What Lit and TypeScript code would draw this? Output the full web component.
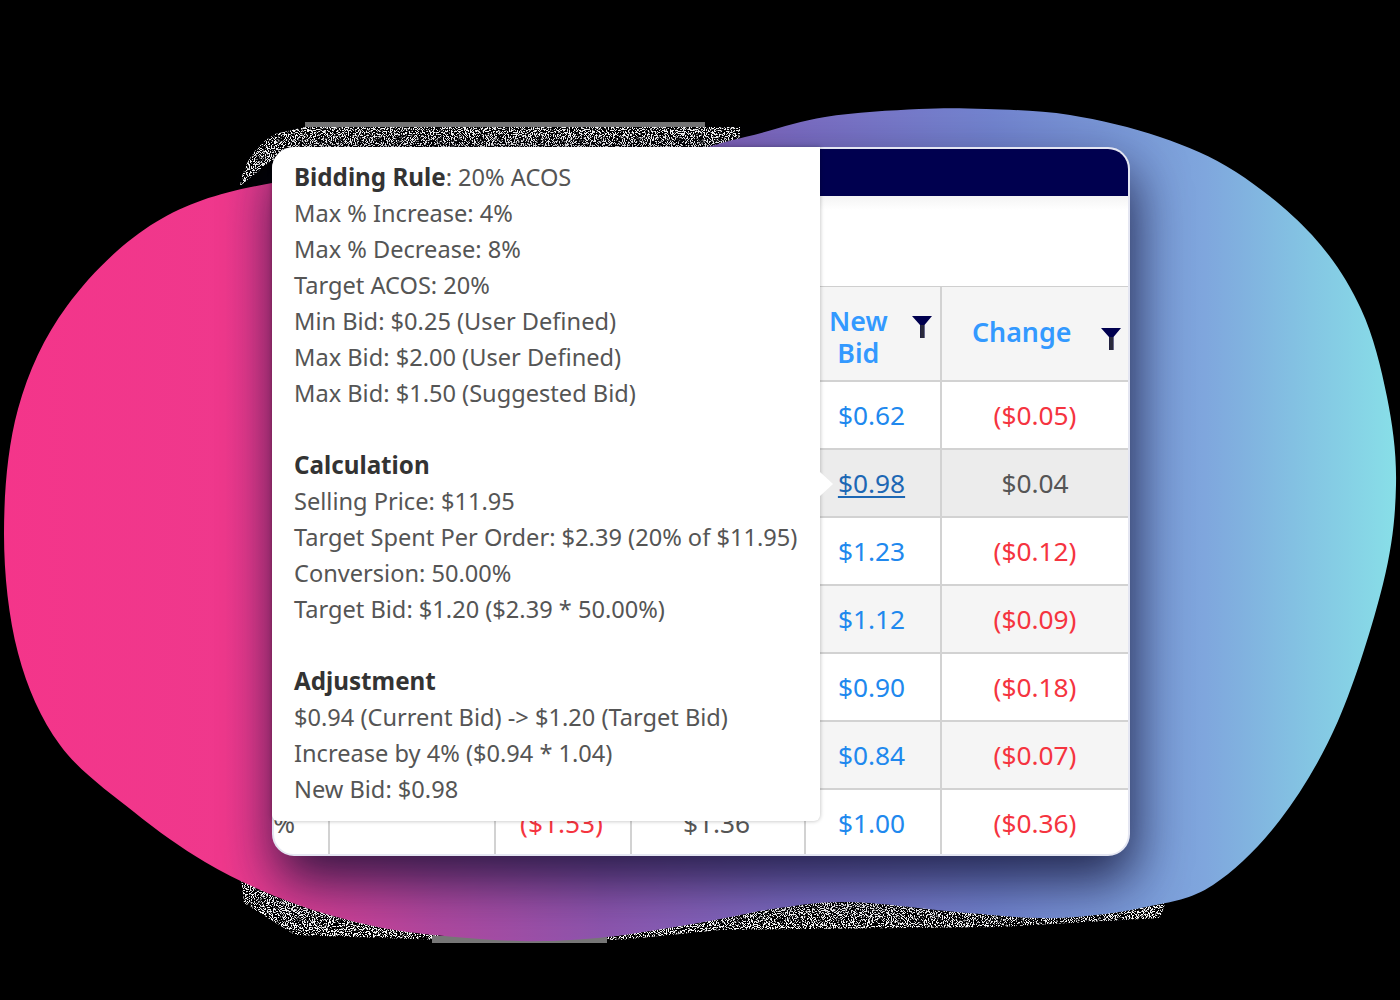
import { LitElement, html, css, svg } from 'lit'
import { customElement } from 'lit/decorators.js'

type Row = { cells?: string[]; bid: string; change: string; alt?: string; link?: boolean }

const ROWS: Row[] = [
  { bid: '$0.62', change: '($0.05)' },
  { bid: '$0.98', change: '$0.04', alt: 'active', link: true },
  { bid: '$1.23', change: '($0.12)' },
  { bid: '$1.12', change: '($0.09)', alt: 'alt' },
  { bid: '$0.90', change: '($0.18)' },
  { bid: '$0.84', change: '($0.07)', alt: 'alt' },
  { cells: ['%', '', '($1.53)', '$1.36'], bid: '$1.00', change: '($0.36)' },
]

// Outline of the backdrop, traced from the left edge of the card.
const OUTLINE: [number, number][] = [
  [272, 183], [156, 222], [67, 306], [18, 409], [4, 534], [18, 653], [60, 745], [134, 812],
  [205, 862], [277, 897], [348, 920], [416, 933], [520, 941], [607, 937], [704, 922], [779, 908], [850, 902],
  [968, 913], [1057, 918], [1146, 907], [1213, 885], [1280, 820], [1338, 721], [1383, 584],
  [1396, 485], [1387, 397], [1361, 309], [1312, 235], [1236, 172], [1160, 137], [1070, 115],
  [986, 109], [919, 109], [825, 117], [745, 137], [640, 160], [450, 170],
]

// Closed Catmull-Rom through the points, written out as cubic segments.
function smoothPath(pts: [number, number][]) {
  const n = pts.length
  let d = `M${pts[0][0]} ${pts[0][1]}`
  for (let i = 0; i < n; i++) {
    const [p0, p1, p2, p3] = [pts[(i + n - 1) % n], pts[i], pts[(i + 1) % n], pts[(i + 2) % n]]
    const c1x = p1[0] + (p2[0] - p0[0]) / 6
    const c1y = p1[1] + (p2[1] - p0[1]) / 6
    const c2x = p2[0] - (p3[0] - p1[0]) / 6
    const c2y = p2[1] - (p3[1] - p1[1]) / 6
    d += ` C${c1x.toFixed(1)} ${c1y.toFixed(1)} ${c2x.toFixed(1)} ${c2y.toFixed(1)} ${p2[0]} ${p2[1]}`
  }
  return d + ' Z'
}

const funnel = svg`<path d="M1 1H21L13.5 10V23H9V10Z" fill="#00004f"/><rect x="9.2" y="10" width="4" height="13" fill="#2a2a3c"/>`

@customElement('app-root')
export class AppRoot extends LitElement {
  static styles = css`
    :host {
      display: block;
      width: 1400px;
      height: 1000px;
      background: #000;
      position: relative;
      overflow: hidden;
      font-family: 'Noto Sans', 'Open Sans', sans-serif;
    }
    .blob {
      position: absolute;
      inset: 0;
    }
    .stage {
      position: relative;
      padding: 147px 0 0 272px;
    }
    .frame {
      position: relative;
      width: 858px;
      height: 709px;
    }
    .card {
      box-sizing: border-box;
      width: 100%;
      height: 100%;
      background: #fff;
      border: 2px solid #e4e6f2;
      border-radius: 22px;
      overflow: hidden;
      box-shadow: 4px 24px 52px rgba(12, 12, 45, 0.8);
    }
    .bar {
      height: 47px;
      background: #00004f;
    }
    .tools {
      height: 90px;
      background: linear-gradient(#f4f4f4, #fff 14px);
    }
    .table {
      display: grid;
      grid-template-columns: 56px 166px 136px 174px 136px 186px;
      grid-template-rows: 95px;
      grid-auto-rows: 68px;
      border-top: 1px solid #cfcfcf;
      font-size: 26.3px;
      color: #555;
    }
    .cell {
      box-sizing: border-box;
      display: flex;
      align-items: center;
      justify-content: center;
      padding-right: 3px;
      border-right: 2px solid #d2d2d2;
      border-bottom: 2px solid #d2d2d2;
      white-space: nowrap;
    }
    .cell.last {
      border-right: 0;
      padding-right: 0;
    }
    .cell.alt {
      background: #f5f5f5;
    }
    .cell.active {
      background: #ececec;
    }
    .head {
      position: relative;
      background: #f5f5f5;
      color: #3399ff;
      font-weight: 600;
      line-height: 32px;
      font-size: 26.8px;
    }
    .name {
      text-align: center;
    }
    .filter {
      position: absolute;
      width: 22px;
      height: 24px;
    }
    .new-bid {
      justify-content: flex-start;
      padding: 6px 0 0 23px;
    }
    .new-bid .filter {
      left: 105px;
      top: 28px;
    }
    .change-head {
      justify-content: flex-start;
      padding: 0 0 4px 30px;
    }
    .change-head .filter {
      left: 158px;
      top: 40px;
    }
    .bid {
      color: #2088ee;
    }
    .bid.link {
      color: #1d67b4;
      text-decoration: underline;
      text-underline-offset: 3px;
    }
    .neg {
      color: #f5343f;
    }
    .pct {
      justify-content: flex-end;
      padding-right: 33px;
    }
    .tip {
      position: absolute;
      top: 0;
      left: 0;
      box-sizing: border-box;
      width: 548px;
      height: 674px;
      padding: 12px 22px;
      background: #fff;
      border-radius: 22px 0 6px 6px;
      box-shadow: 0 0 4px rgba(0, 0, 0, 0.28);
      font-size: 23.6px;
      line-height: 36px;
      color: #555;
      white-space: nowrap;
    }
    .tip b {
      color: #333;
      font-weight: 700;
      font-size: 24.2px;
    }
    .tip p {
      margin: 0;
      min-height: 36px;
    }
    .arrow {
      position: absolute;
      left: 548px;
      top: 325px;
      width: 0;
      height: 0;
      border-left: 13px solid #fff;
      border-top: 12px solid transparent;
      border-bottom: 12px solid transparent;
    }
  `

  private _change(text: string) {
    return text.startsWith('(') ? 'neg' : ''
  }

  private _row(r: Row) {
    const alt = r.alt ?? ''
    const left = r.cells ?? ['', '', '', '']
    return html`
      <div class="cell pct ${alt}">${left[0]}</div>
      <div class="cell ${alt}">${left[1]}</div>
      <div class="cell ${alt} ${this._change(left[2])}">${left[2]}</div>
      <div class="cell ${alt}">${left[3]}</div>
      <div class="cell ${alt}">
        <span class="bid ${r.link ? 'link' : ''}">${r.bid}</span>
      </div>
      <div class="cell last ${alt} ${this._change(r.change)}">${r.change}</div>
    `
  }

  render() {
    return html`
      <svg class="blob" width="1400" height="1000" viewBox="0 0 1400 1000">
        <defs>
          <linearGradient id="blobFill" gradientUnits="userSpaceOnUse" x1="0" y1="0" x2="1400" y2="0">
            <stop offset="0" stop-color="#f4358a" />
            <stop offset="0.16" stop-color="#ef388c" />
            <stop offset="0.31" stop-color="#b0489f" />
            <stop offset="0.43" stop-color="#8d55ae" />
            <stop offset="0.57" stop-color="#7a6cc2" />
            <stop offset="0.71" stop-color="#7284cf" />
            <stop offset="0.86" stop-color="#7fa6dd" />
            <stop offset="1" stop-color="#88e0e8" />
          </linearGradient>
          <filter id="speckle" x="0" y="0" width="100%" height="100%">
            <feTurbulence type="fractalNoise" baseFrequency="0.95" numOctaves="2" seed="4" />
            <feColorMatrix values="0 0 0 0 1  0 0 0 0 1  0 0 0 0 1  0 0 0 14 -7" />
            <feComposite operator="in" in2="SourceGraphic" />
          </filter>
        </defs>
        <g filter="url(#speckle)">
          <path d="M240 186 C243 165 255 145 275 134 L305 127 H740 V160 H272 Z" fill="#fff" />
          <path d="M240 870 L244 903 L295 935 L440 940 H620 L720 930 L1000 927 L1160 918 L1170 890 Z" fill="#fff" />
        </g>
        <rect x="305" y="122" width="400" height="5" fill="#777" />
        <rect x="432" y="936" width="175" height="7" fill="#777" />
        <path d=${smoothPath(OUTLINE)} fill="url(#blobFill)" />
      </svg>
      <div class="stage">
        <div class="frame">
          <div class="card">
            <div class="bar"></div>
            <div class="tools"></div>
            <div class="table">
              <div class="cell head"></div>
              <div class="cell head"></div>
              <div class="cell head"></div>
              <div class="cell head"></div>
              <div class="cell head new-bid">
                <span class="name">New<br />Bid</span>
                <svg class="filter" viewBox="0 0 22 24">${funnel}</svg>
              </div>
              <div class="cell head last change-head">
                <span class="name">Change</span>
                <svg class="filter" viewBox="0 0 22 24">${funnel}</svg>
              </div>
              ${ROWS.map((r) => this._row(r))}
            </div>
          </div>
          <div class="tip">
            <p><b>Bidding Rule</b>: 20% ACOS</p>
            <p>Max % Increase: 4%</p>
            <p>Max % Decrease: 8%</p>
            <p>Target ACOS: 20%</p>
            <p>Min Bid: $0.25 (User Defined)</p>
            <p>Max Bid: $2.00 (User Defined)</p>
            <p>Max Bid: $1.50 (Suggested Bid)</p>
            <p></p>
            <p><b>Calculation</b></p>
            <p>Selling Price: $11.95</p>
            <p>Target Spent Per Order: $2.39 (20% of $11.95)</p>
            <p>Conversion: 50.00%</p>
            <p>Target Bid: $1.20 ($2.39 * 50.00%)</p>
            <p></p>
            <p><b>Adjustment</b></p>
            <p>$0.94 (Current Bid) -> $1.20 (Target Bid)</p>
            <p>Increase by 4% ($0.94 * 1.04)</p>
            <p>New Bid: $0.98</p>
          </div>
          <div class="arrow"></div>
        </div>
      </div>
    `
  }
}
